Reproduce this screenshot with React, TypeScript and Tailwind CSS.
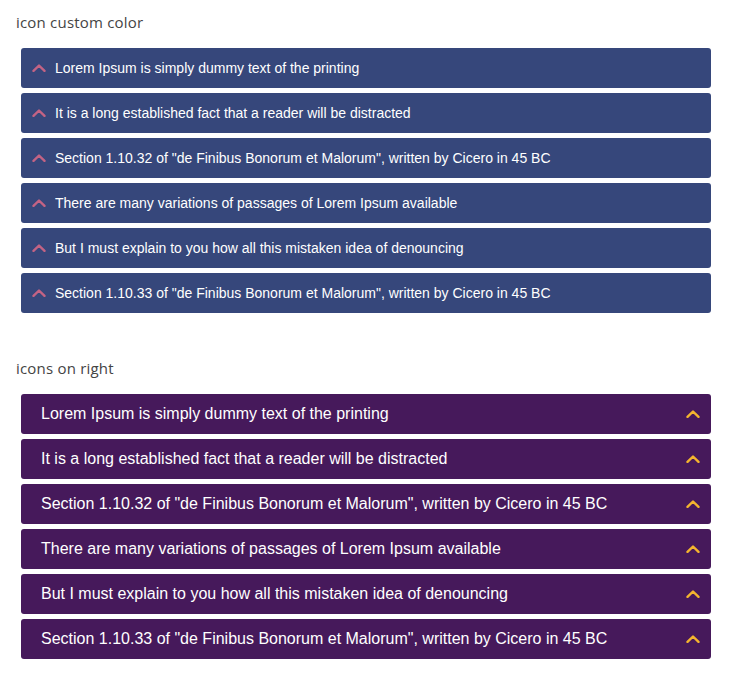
const items = [
  "Lorem Ipsum is simply dummy text of the printing",
  "It is a long established fact that a reader will be distracted",
  'Section 1.10.32 of "de Finibus Bonorum et Malorum", written by Cicero in 45 BC',
  "There are many variations of passages of Lorem Ipsum available",
  "But I must explain to you how all this mistaken idea of denouncing",
  'Section 1.10.33 of "de Finibus Bonorum et Malorum", written by Cicero in 45 BC',
];

function Chevron({ className }: { className: string }) {
  return (
    <svg viewBox="0 0 14 8" className={className} fill="none" stroke="currentColor" strokeWidth="2.4" strokeLinecap="round" strokeLinejoin="round">
      <path d="M1.5 6.8 7 1.5l5.5 5.3" />
    </svg>
  );
}

export default function App() {
  return (
    <div className="min-h-[681px] bg-white pl-[21px] pt-[13px] w-[711px]">
      <h3 className="-ml-[5px] text-[15px] leading-[18px] text-[#444] font-['Open_Sans',sans-serif] tracking-[0.2px]">
        icon custom color
      </h3>
      <div className="mt-[17px] flex flex-col gap-[5px]">
        {items.map((t) => (
          <div key={"a" + t} className="flex h-[40px] items-center rounded-[3px] bg-[#36477b] pl-[11px] text-white">
            <Chevron className="h-[8px] w-[14px] text-[#c36384]" />
            <span className="ml-[9px] font-['Liberation_Sans',Arial,sans-serif] text-[14px]">{t}</span>
          </div>
        ))}
      </div>
      <h3 className="-ml-[5px] mt-[46px] text-[15px] leading-[18px] text-[#444] font-['Open_Sans',sans-serif] tracking-[0.2px]">
        icons on right
      </h3>
      <div className="mt-[17px] flex flex-col gap-[5px]">
        {items.map((t) => (
          <div key={"b" + t} className="flex h-[40px] items-center justify-between rounded-[3px] bg-[#46195b] pl-[20px] pr-[11px] text-white">
            <span className="font-['Liberation_Sans',Arial,sans-serif] text-[16px]">{t}</span>
            <Chevron className="h-[8px] w-[14px] text-[#f4b42e]" />
          </div>
        ))}
      </div>
    </div>
  );
}
